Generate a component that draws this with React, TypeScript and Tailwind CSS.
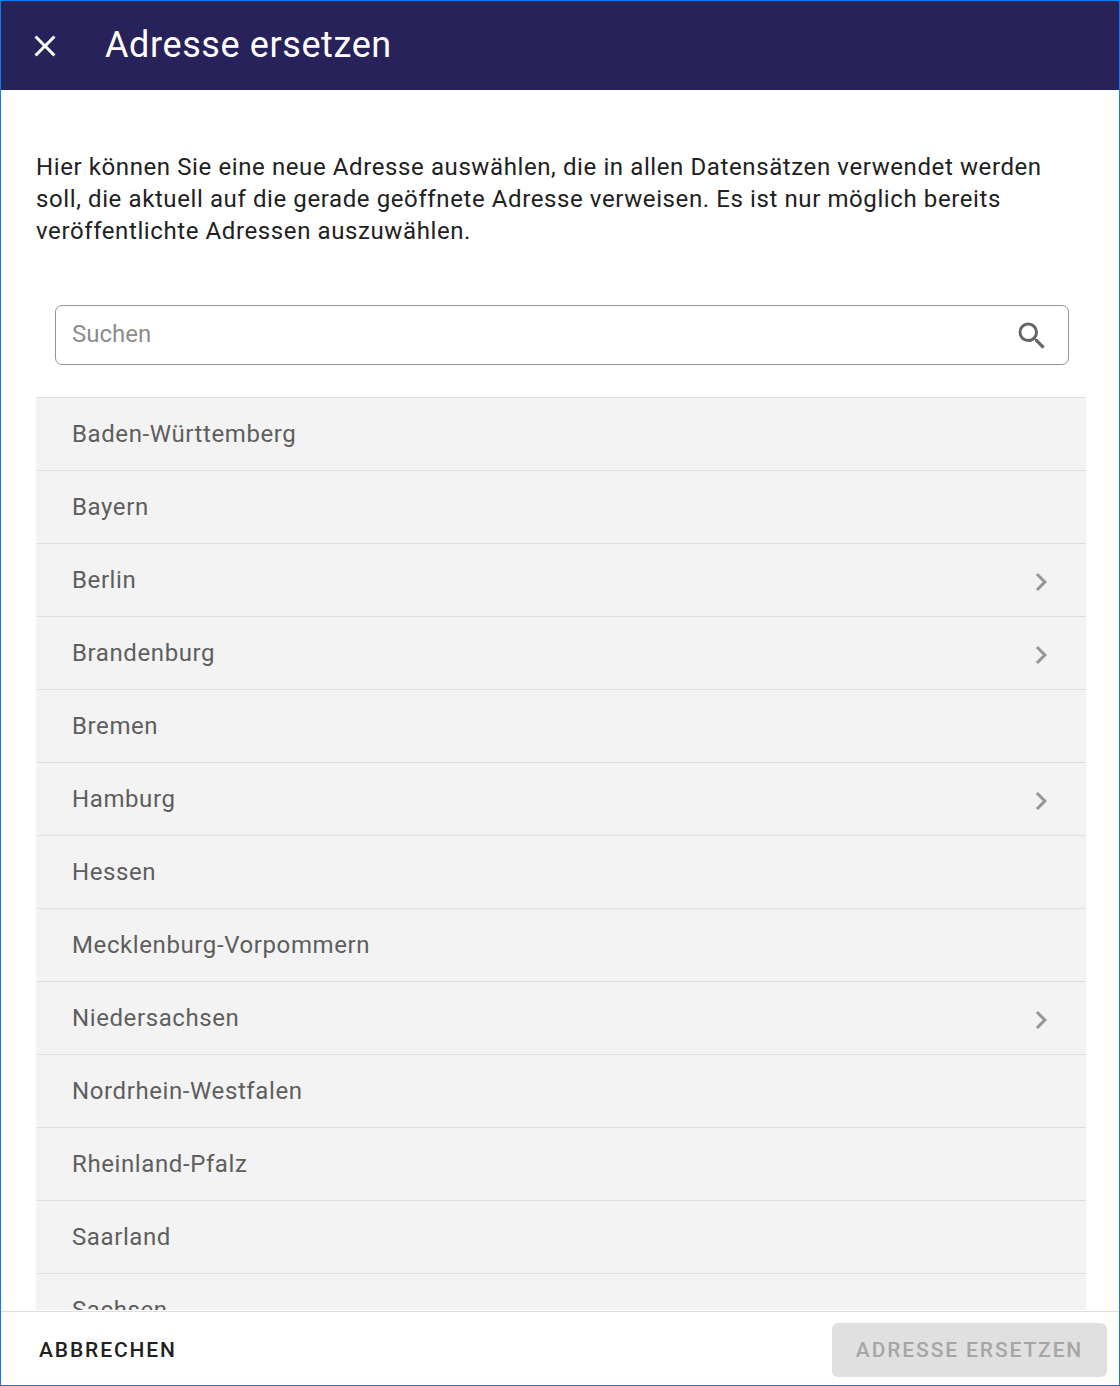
import { MdChevronRight, MdClose, MdSearch } from "react-icons/md";

const regions = [
  { name: "Baden-Württemberg" },
  { name: "Bayern" },
  { name: "Berlin", children: true },
  { name: "Brandenburg", children: true },
  { name: "Bremen" },
  { name: "Hamburg", children: true },
  { name: "Hessen" },
  { name: "Mecklenburg-Vorpommern" },
  { name: "Niedersachsen", children: true },
  { name: "Nordrhein-Westfalen" },
  { name: "Rheinland-Pfalz" },
  { name: "Saarland" },
  { name: "Sachsen" },
];

function Header() {
  return (
    <header className="flex h-[89px] shrink-0 items-center bg-[#28225a] pl-[26px] text-white">
      <button aria-label="Schließen" className="size-9">
        <MdClose className="size-9" />
      </button>
      <h1 className="mb-0.5 ml-[42px] text-[36px] leading-[48px] tracking-[0.6px]">Adresse ersetzen</h1>
    </header>
  );
}

function SearchField() {
  return (
    <label className="mr-[18px] ml-[19px] mt-[58px] flex h-[60px] shrink-0 items-center rounded-[7px] border border-[#949494] pr-[18px] pl-4">
      <input
        placeholder="Suchen"
        className="mb-0.5 h-9 min-w-0 flex-1 text-2xl leading-9 outline-none placeholder:text-[#8c8c8c]"
      />
      <MdSearch className="mt-0.5 size-9 text-[#666]" />
    </label>
  );
}

function RegionList() {
  return (
    <ul className="mt-8 mr-px bg-[#f3f3f3] pl-px">
      {regions.map((region) => (
        <li
          key={region.name}
          className="flex h-[73px] items-center justify-between border-t border-[#dedede] pr-[27px] pl-[35px] text-2xl tracking-[0.6px] text-[#5e5e5e]"
        >
          <span>{region.name}</span>
          {region.children && <MdChevronRight className="mt-1 size-9 text-[#969696]" />}
        </li>
      ))}
    </ul>
  );
}

export default function App() {
  return (
    <div className="flex h-[1386px] w-[1120px] flex-col border border-[#0a7cf5] bg-white font-['Roboto',sans-serif]">
      <Header />
      <main className="flex min-h-0 flex-1 flex-col overflow-hidden pr-[32px] pl-[35px]">
        <p className="mt-[61px] text-2xl leading-8 tracking-[0.6px] text-[#212121]">
          Hier können Sie eine neue Adresse auswählen, die in allen Datensätzen verwendet werden
          <br />
          soll, die aktuell auf die gerade geöffnete Adresse verweisen. Es ist nur möglich bereits
          <br />
          veröffentlichte Adressen auszuwählen.
        </p>
        <SearchField />
        <RegionList />
      </main>
      <footer className="mt-px flex h-[74px] shrink-0 items-center justify-between border-t border-[#dedede] pt-0.5 pr-3 pl-[38px] text-[21px] font-medium">
        <button className="pt-0.5 tracking-[1.875px] text-[#212121]">ABBRECHEN</button>
        <button
          disabled
          className="h-[54px] w-[275px] rounded-md bg-[#e0e0e0] pt-0.5 tracking-[1.875px] text-[#a6a6a6]"
        >
          ADRESSE ERSETZEN
        </button>
      </footer>
    </div>
  );
}
